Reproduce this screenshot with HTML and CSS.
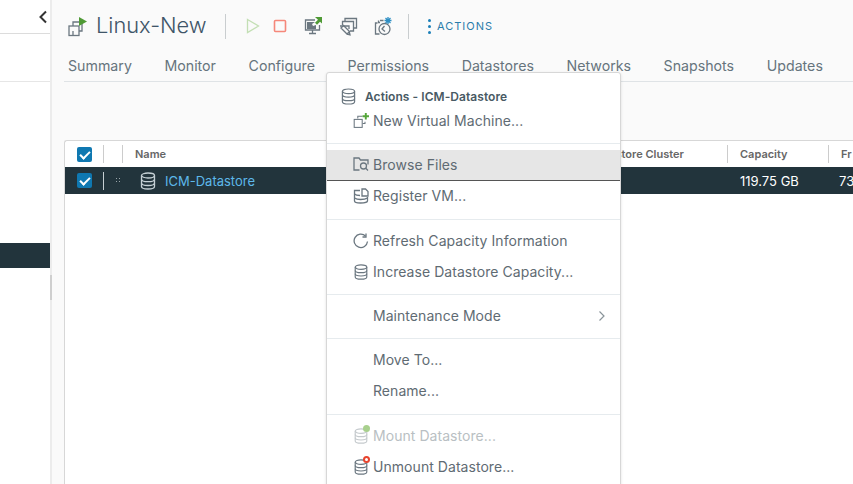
FILE: index.html
```html
<!DOCTYPE html>
<html lang="en">
<head>
    <meta charset="UTF-8">
    <title>Linux-New</title>
    <link rel="stylesheet" href="styles.css">
</head>
<body>

<svg class="defs" width="0" height="0">
    <symbol id="db" viewBox="0 0 16 18">
        <ellipse cx="8" cy="3.500" rx="6.500" ry="2.500"/>
        <path d="M1.500 3.500v11c0 1.400 2.900 2.500 6.500 2.500s6.500-1.100 6.500-2.500v-11"/>
        <path d="M1.500 7.200c0 1.400 2.900 2.500 6.500 2.500s6.500-1.100 6.500-2.500M1.500 11c0 1.400 2.900 2.500 6.500 2.500s6.500-1.100 6.500-2.500"/>
    </symbol>
</svg>

<aside class="sidebar">
    <div class="side-top">
        <span class="collapse">
            <svg width="10" height="14" viewBox="0 0 10 14"><path d="M8 1.500 2.500 7 8 12.500"/></svg>
        </span>
    </div>
    <div class="side-row"></div>
    <div class="side-selected"></div>
    <div class="side-thumb"></div>
</aside>

<main class="main">
    <header class="head">
        <svg class="title-icon icon" width="21" height="21" viewBox="0 0 21 21">
            <path d="M6 10V6h9v9h-3"/>
            <rect x="2" y="10" width="10" height="9.500"/>
            <path d="M6 15v4.500"/>
            <path class="green-fill" d="M12 1l8 4.500-8 4.500z"/>
        </svg>
        <h1 class="title">Linux-New</h1>
        <span class="divider"></span>
        <div class="tools">
            <svg class="tool play" width="14" height="16" viewBox="0 0 14 16"><path d="M1.500 1.500 12.500 8 1.500 14.500z"/></svg>
            <svg class="tool stop" width="14" height="14" viewBox="0 0 14 14"><rect x="1.500" y="1.500" width="11" height="11" rx="1"/></svg>
            <svg class="tool icon" width="19" height="18" viewBox="0 0 19 18">
                <path d="M11 3H1.500v10h14V8"/>
                <path d="M8.500 13v3M5 16.500h7"/>
                <path class="fill-grey" d="M3 5h8l-3 2 1 2 3-1v4H3z"/>
                <path class="green-fill" d="M11 0h7v6.500l-2-1.800-3 3-2-2 3-3z"/>
            </svg>
            <svg class="tool icon" width="19" height="19" viewBox="0 0 19 19">
                <path d="M6 5V1.500h11.500V11H15"/>
                <path d="M3.500 8V4.500H14.500V14H11"/>
                <path d="M1 9h9v3"/>
                <path d="M2 11l6 6 2.500-2.500-6-6zM8 17l3 .8-.7-3"/>
            </svg>
            <svg class="tool icon" width="18" height="19" viewBox="0 0 18 19">
                <path d="M6 5.500H4.500v-2M9.500 3.500H6"/>
                <path d="M3.500 6H1.500v11h4"/>
                <circle cx="10.500" cy="12" r="5.500"/>
                <path d="M10.500 9l-2.500 3 3 2.500"/>
                <path class="blue-line" d="M14 0v7M10.500 3.500h7M11.500 1l5 5M16.500 1l-5 5"/>
            </svg>
        </div>
        <span class="divider"></span>
        <a class="actions">
            <span class="dots"><i></i><i></i><i></i></span>
            ACTIONS
        </a>
    </header>

    <nav class="tabs">
        <span>Summary</span>
        <span>Monitor</span>
        <span>Configure</span>
        <span>Permissions</span>
        <span>Datastores</span>
        <span>Networks</span>
        <span>Snapshots</span>
        <span>Updates</span>
    </nav>

    <section class="grid">
        <div class="grid-row grid-head">
            <div class="cell"><span class="check"></span></div>
            <div class="cell"></div>
            <div class="cell">Name</div>
            <div class="cell">Datastore Cluster</div>
            <div class="cell">Capacity</div>
            <div class="cell">Fr</div>
        </div>
        <div class="grid-row grid-selected">
            <div class="cell"><span class="check"></span></div>
            <div class="cell"><span class="grip"></span></div>
            <div class="cell">
                <svg class="row-icon" width="16" height="18"><use href="#db"/></svg>
                <a class="link">ICM-Datastore</a>
            </div>
            <div class="cell"></div>
            <div class="cell">119.75 GB</div>
            <div class="cell">73</div>
        </div>
    </section>
</main>

<div class="menu">
    <div class="menu-title">
        <svg class="icon" width="15" height="17"><use href="#db"/></svg>
        Actions - ICM-Datastore
    </div>
    <div class="menu-group first">
        <div class="item">
            <svg class="icon" width="16" height="16" viewBox="0 0 20 20">
                <path d="M6 7V4h6M15 11v2h-3"/>
                <rect x="1.500" y="8" width="10" height="10"/>
                <path class="green-line" d="M16 0v8M12 4h8"/>
            </svg>
            New Virtual Machine...
        </div>
    </div>
    <div class="menu-group wide">
        <div class="item hover">
            <svg class="icon" width="16" height="16" viewBox="0 0 16 16">
                <path d="M6.500 14H1V2h5l1.500 2H15v4.500"/>
                <circle cx="10.500" cy="10" r="3"/>
                <path d="M12.800 12.300 15 14.500"/>
            </svg>
            Browse Files
        </div>
        <div class="item">
            <svg class="icon" width="16" height="16" viewBox="0 0 16 16">
                <path d="M7 2.500H1.500V13c0 1 2 2 6 2s7-1 7-2V9"/>
                <path d="M1.500 6c1 1 3 1.500 5.500 1.500M1.500 10c1.500 1 3.500 1.500 6 1.500s5.500-.5 7-1.500"/>
                <path d="M9 4V1h3.500L15 3.500V8H9z"/>
            </svg>
            Register VM...
        </div>
    </div>
    <div class="menu-group">
        <div class="item">
            <svg class="icon" width="16" height="16" viewBox="0 0 16 16">
                <path d="M14.500 8.500A6.700 6.700 0 1 1 12.500 3"/>
                <path d="M13 .5V4H9.500"/>
            </svg>
            Refresh Capacity Information
        </div>
        <div class="item">
            <svg class="icon" width="16" height="16"><use href="#db"/></svg>
            Increase Datastore Capacity...
        </div>
    </div>
    <div class="menu-group">
        <div class="item">
            <span class="no-icon"></span>
            Maintenance Mode
            <svg class="arrow" width="8" height="12" viewBox="0 0 8 12"><path d="M1.500 1.500 6 6l-4.500 4.500"/></svg>
        </div>
    </div>
    <div class="menu-group wide">
        <div class="item"><span class="no-icon"></span>Move To...</div>
        <div class="item"><span class="no-icon"></span>Rename...</div>
    </div>
    <div class="menu-group">
        <div class="item disabled">
            <span class="badged">
                <svg class="icon" width="16" height="16"><use href="#db"/></svg>
                <i class="dot-green"></i>
            </span>
            Mount Datastore...
        </div>
        <div class="item">
            <span class="badged">
                <svg class="icon" width="16" height="16"><use href="#db"/></svg>
                <i class="dot-red"></i>
            </span>
            Unmount Datastore...
        </div>
    </div>
</div>

</body>
</html>
```

FILE: styles.css
```css
* {box-sizing: border-box; margin: 0; padding: 0;}

body {
    font-family: 'Inter', 'Liberation Sans', sans-serif;
    background: #fff;
    color: #565656;
    display: flex;
    height: 100vh;
    overflow: hidden;
}

.defs {
    position: absolute;
}

.icon {
    fill: none;
    stroke: #6b7780;
    stroke-width: 1.3;
}

/* left tree panel */
.sidebar {
    width: 52px;
    flex: none;
    background: #fff;
    border-right: 2px solid #ececec;
    position: relative;
}

.side-top {
    height: 34px;
    border-bottom: 1px solid #dcdcdc;
    display: flex;
    justify-content: flex-end;
    padding: 8px 2px 0 0;
}

.collapse svg {
    fill: none;
    stroke: #333;
    stroke-width: 2;
}

.side-row {
    height: 48px;
    border-bottom: 1px solid #e6e6e6;
}

.side-selected {
    height: 25px;
    margin-top: 161px;
    background: #22343c;
}

.side-thumb {
    position: absolute;
    right: -2px;
    top: 275px;
    width: 2px;
    height: 25px;
    background: #cfcfcf;
}

/* main area */
.main {
    flex: 1;
    min-width: 0;
    background: #fafafa;
    padding-left: 12px;
    display: flex;
    flex-direction: column;
}

.head {
    height: 52px;
    display: flex;
    align-items: center;
    padding-left: 3px;
    flex: none;
}

.title-icon {
    margin-right: 8px;
}

.title {
    font-size: 21.800px;
    font-weight: 300;
    color: #3f5568;
    width: 129px;
    padding-bottom: 2px;
}

.divider {
    width: 1px;
    height: 25px;
    background: #c9cdcf;
}

.tools {
    display: flex;
    align-items: center;
    width: 182px;
    padding-left: 20px;
    gap: 16px;
}

.tool {
    fill: none;
    stroke-width: 1.300;
}

.play {
    stroke: #c3dfb4;
}

.stop {
    stroke: #f5877a;
    stroke-width: 1.600;
    margin-left: -3px;
    margin-right: 1px;
}

.green-fill {
    fill: #4f9a35;
    stroke: none;
}

.fill-grey {
    fill: #6b7780;
    stroke: none;
}

.blue-line {
    stroke: #2e8fc4;
}

.green-line {
    stroke: #55a63a;
    stroke-width: 2.400;
}

.actions {
    display: flex;
    align-items: center;
    gap: 6px;
    margin-left: 19px;
    color: #2a7cab;
    font-size: 11px;
    font-weight: 400;
    letter-spacing: 1px;
}

.dots {
    display: flex;
    flex-direction: column;
    gap: 3px;
}

.dots i {
    width: 3px;
    height: 3px;
    border-radius: 50%;
    background: #1b7fb8;
}

.tabs {
    height: 30px;
    flex: none;
    display: flex;
    gap: 32.600px;
    padding: 5px 0 0 4px;
    border-bottom: 1px solid #dfe3e6;
    font-size: 14.200px;
    color: #66747d;
}

/* datastore table */
.grid {
    flex: 1;
    margin-top: 58px;
    background: #fff;
    border: 1px solid #d7d7d7;
    border-right: 0;
    border-bottom: 0;
    border-radius: 3px 0 0 0;
    font-size: 11px;
}

.grid-row {
    display: grid;
    grid-template-columns: 38px 19px 456px 149px 101px 1fr;
    align-items: center;
}

.grid-head {
    height: 26px;
    font-weight: 600;
    color: #666;
}

.grid-head .cell {
    border-left: 1px solid #ccc;
    height: 18px;
    padding-left: 12px;
    display: flex;
    align-items: center;
}

.grid-head .cell:first-child {
    border-left: 0;
}

.grid-selected {
    height: 27px;
    background: #22343c;
    color: #fff;
    font-size: 13px;
}

.grid-selected .cell {
    padding-left: 12px;
    display: flex;
    align-items: center;
}

.grid-selected .cell:nth-child(3) {
    padding-left: 18px;
    gap: 9px;
}

.grid-selected .cell:nth-child(5) {
    padding-left: 13px;
}

.grid-selected .cell:nth-child(6) {
    padding-left: 11px;
}

.check {
    display: block;
    width: 15px;
    height: 15px;
    background: #0f78b1;
    border-radius: 2px;
    position: relative;
}

.check::after {
    content: "";
    position: absolute;
    left: 3px;
    top: 4px;
    width: 8px;
    height: 4px;
    border-left: 2px solid #fff;
    border-bottom: 2px solid #fff;
    transform: rotate(-45deg);
}

.grid-selected .cell:nth-child(2) {
    border-left: 1px solid #c5ced2;
    height: 18px;
    padding-left: 11px;
}

.grip {
    width: 5px;
    height: 7px;
    background: radial-gradient(circle, #9aa5aa 1px, transparent 1px) 0 0 / 3px 3px;
}

.row-icon {
    fill: none;
    stroke: #c5d0d5;
    stroke-width: 1.300;
}

.link {
    color: #5db8ea;
}

/* actions popup */
.menu {
    position: absolute;
    left: 326px;
    top: 72px;
    width: 295px;
    height: 420px;
    background: #fff;
    border: 1px solid #d7d7d7;
    border-radius: 3px;
    box-shadow: 0 1px 3px rgba(0,0,0,0.12);
    font-size: 14px;
    letter-spacing: 0.05px;
    color: #5f6b73;
}

.menu-title {
    display: flex;
    align-items: center;
    gap: 9px;
    height: 33px;
    padding: 13px 0 0 14px;
    font-size: 12px;
    font-weight: 600;
    color: #495a64;
}

.menu-group {
    padding: 6px 0;
    border-top: 1px solid #e6ebee;
}

.menu-group.wide {
    padding-bottom: 7px;
}

.menu-group.first {
    border-top: 0;
    padding: 0 0 6px;
}

.item {
    height: 31px;
    display: flex;
    align-items: center;
    padding: 0 0 2px 26px;
    gap: 4px;
    position: relative;
}

.item.hover {
    background: #e6e6e6;
    border-bottom: 1px solid #555;
}

.item.disabled {
    color: #b9bfc3;
}

.item.disabled .icon {
    stroke: #c5cacd;
}

.no-icon {
    width: 16px;
}

.arrow {
    position: absolute;
    right: 14px;
    fill: none;
    stroke: #8a949a;
    stroke-width: 1.200;
}

.badged {
    position: relative;
    display: flex;
    width: 16px;
}

.dot-green, .dot-red {
    position: absolute;
    right: -1px;
    top: -3px;
    width: 7px;
    height: 7px;
    border-radius: 50%;
}

.dot-green {
    background: #a8d08d;
}

.dot-red {
    background: #fff;
    border: 2px solid #e8442e;
}
```
